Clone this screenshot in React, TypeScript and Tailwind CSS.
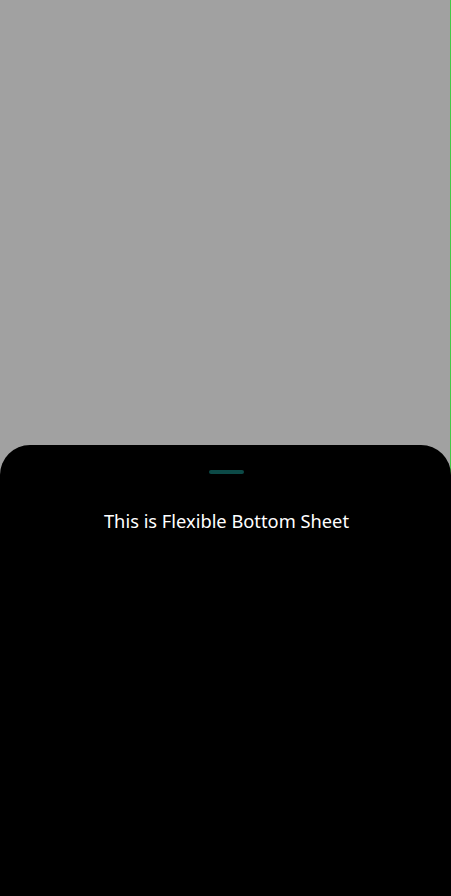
export default function App() {
    return (
        <div className="h-[896px] w-full bg-[#a1a1a1] shadow-[inset_-1px_0_0_#46c846] flex flex-col overflow-hidden">
            <div className="flex-1" />
            {/* Bottom sheet */}
            <div className="h-[451px] bg-black rounded-t-[30px] flex flex-col items-center">
                <div className="mt-[25px] ml-[2px] w-[35px] h-[4px] rounded-full bg-[#0c4a47]" />
                <p
                    className="mt-[35px] ml-[2px] text-white text-[18.3px] leading-[24px]"
                    style={{ fontFamily: '"Noto Sans", "Open Sans", sans-serif' }}
                >
                    This is Flexible Bottom Sheet
                </p>
            </div>
        </div>
    );
}
